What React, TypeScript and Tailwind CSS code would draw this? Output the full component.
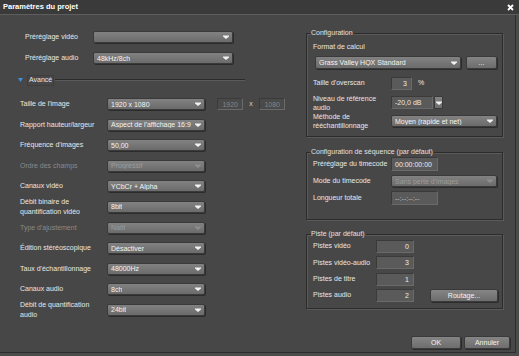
import type { ReactNode } from 'react';

function Arrow({ dim = false }: { dim?: boolean }) {
    return (
        <svg width="6" height="4" viewBox="0 0 6 4" className="shrink-0">
            <path d="M0 0.5H6V1.5L3 4L0 1.5Z" fill={dim ? '#8e8e8e' : '#f2f2f2'} />
        </svg>
    );
}

function Select({ value, className, disabled = false }: { value?: string; className: string; disabled?: boolean }) {
    return (
        <div
            className={`flex items-center justify-between rounded-[2px] border border-[#3a3a3a] bg-gradient-to-b from-[#828282] to-[#6b6b6b] pl-[3px] pr-[3px] shadow-[1px_1px_0_#2c2c2c] ${className} ${disabled ? 'text-[#9c9c9c]' : 'text-[#f4f4f4]'}`}
        >
            <span className="truncate leading-none">{value}</span>
            <Arrow dim={disabled} />
        </div>
    );
}

function Field({ value, className, dim = false }: { value: string; className: string; dim?: boolean }) {
    return (
        <div
            className={`flex items-center justify-end border border-t-[#3a3a3a] border-l-[#3a3a3a] border-r-[#6a6a6a] border-b-[#6a6a6a] pr-[4px] leading-none ${dim ? 'bg-[#4a4a4a] text-[#858585]' : 'bg-[#5a5a5a] text-[#ececec]'} ${className}`}
        >
            {value}
        </div>
    );
}

function Button({ label, className }: { label: string; className: string }) {
    return (
        <div
            className={`flex items-center justify-center rounded-[2px] border border-[#3a3a3a] bg-gradient-to-b from-[#858585] to-[#6d6d6d] text-[#f4f4f4] leading-none shadow-[1px_1px_0_#2c2c2c] ${className}`}
        >
            {label}
        </div>
    );
}

function Row({ label, disabled = false, children }: { label: ReactNode; disabled?: boolean; children: ReactNode }) {
    return (
        <div className="flex h-[12px] items-center">
            <div className={`w-[87px] leading-[10px] ${disabled ? 'text-[#8a8a8a]' : 'text-[#e8e8e8]'}`}>{label}</div>
            {children}
        </div>
    );
}

function Group({ title, className, children }: { title: string; className: string; children: ReactNode }) {
    return (
        <div className={`relative border border-[#2c2c2c] shadow-[1px_1px_0_#5a5a5a,inset_1px_1px_0_#5a5a5a] ${className}`}>
            <span className="absolute left-[4px] top-[-6px] bg-[#474747] pr-[1px] leading-[10px] text-[#e2e2e2]">{title}</span>
            {children}
        </div>
    );
}

export default function App() {
    return (
        <div className="flex h-[356px] w-[519px] flex-col bg-[#4b4b4b] font-['Liberation_Sans',Arial,sans-serif] text-[7px] text-[#e8e8e8]">
            {/* Title bar */}
            <div className="flex h-[15px] shrink-0 items-center justify-between border-b border-[#5e5e5e] bg-[#3a3a3a] pl-[3px] pr-[5px]">
                <span className="text-[7.5px] font-bold text-white">Paramètres du projet</span>
                <svg width="7" height="7" viewBox="0 0 7 7">
                    <path d="M1 1L6 6M6 1L1 6" stroke="#ffffff" strokeWidth="1.8" />
                </svg>
            </div>

            <div className="flex h-[338px] w-[516px] flex-col border-b border-r border-[#2c2c2c] bg-[#474747]">
                <div className="flex h-[305px]">
                    {/* Left column */}
                    <div className="flex w-[306px] flex-col">
                        <div className="mt-[16px] flex flex-col gap-[9px] pl-[25px]">
                            <div className="flex h-[12px] items-center">
                                <span className="w-[68px]">Préréglage vidéo</span>
                                <Select className="h-[12px] w-[140px]" />
                            </div>
                            <div className="flex h-[12px] items-center">
                                <span className="w-[68px]">Préréglage audio</span>
                                <Select value="48kHz/8ch" className="h-[12px] w-[140px]" />
                            </div>
                        </div>

                        <div className="mt-[10px] flex h-[12px] items-center pl-[18px]">
                            <svg width="5" height="4" viewBox="0 0 5 4" className="mr-[4px]">
                                <path d="M0 0H5L2.5 4Z" fill="#3d8fe0" />
                            </svg>
                            <span className="flex h-[11px] items-center border border-[#3e3e3e] px-[1px]">Avancé</span>
                            <div className="ml-[1px] h-[2px] w-[190px] border-b border-t border-b-[#5a5a5a] border-t-[#2c2c2c]" />
                        </div>

                        <div className="mt-[12px] flex flex-col gap-[8.6px] pl-[20px]">
                            <Row label="Taille de l'image">
                                <Select value="1920 x 1080" className="h-[12px] w-[98px]" />
                                <Field value="1920" dim className="ml-[12px] h-[12px] w-[26px]" />
                                <span className="w-[16px] text-center text-[#cfcfcf]">x</span>
                                <Field value="1080" dim className="h-[12px] w-[26px]" />
                            </Row>
                            <Row label="Rapport hauteur/largeur">
                                <Select value="Aspect de l'affichage 16:9" className="h-[12px] w-[98px]" />
                            </Row>
                            <Row label="Fréquence d'images">
                                <Select value="50,00" className="h-[12px] w-[98px]" />
                            </Row>
                            <Row label="Ordre des champs" disabled>
                                <Select value="Progressif" disabled className="h-[12px] w-[98px]" />
                            </Row>
                            <Row label="Canaux vidéo">
                                <Select value="YCbCr + Alpha" className="h-[12px] w-[98px]" />
                            </Row>
                            <Row label={<>Débit binaire de<br />quantification vidéo</>}>
                                <Select value="8bit" className="h-[12px] w-[98px]" />
                            </Row>
                            <Row label="Type d'ajustement" disabled>
                                <Select value="Natif" disabled className="h-[12px] w-[98px]" />
                            </Row>
                            <Row label="Édition stéréoscopique">
                                <Select value="Désactiver" className="h-[12px] w-[98px]" />
                            </Row>
                            <Row label="Taux d'échantillonnage">
                                <Select value="48000Hz" className="h-[12px] w-[98px]" />
                            </Row>
                            <Row label="Canaux audio">
                                <Select value="8ch" className="h-[12px] w-[98px]" />
                            </Row>
                            <Row label={<>Débit de quantification<br />audio</>}>
                                <Select value="24bit" className="h-[12px] w-[98px]" />
                            </Row>
                        </div>
                    </div>

                    {/* Right column */}
                    <div className="flex w-[197px] flex-col">
                        <Group title="Configuration" className="mt-[18px] flex h-[104px] flex-col pl-[6px] pt-[8px]">
                            <span className="h-[10px] leading-[10px]">Format de calcul</span>
                            <div className="mt-[4px] flex items-center pl-[2px]">
                                <Select value="Grass Valley HQX Standard" className="h-[13px] w-[146px]" />
                                <Button label="..." className="ml-[5px] h-[13px] w-[31px]" />
                            </div>
                            <div className="mt-[8px] flex h-[13px] items-center">
                                <span className="w-[78px]">Taille d'overscan</span>
                                <Field value="3" className="h-[13px] w-[21px]" />
                                <span className="ml-[6px]">%</span>
                            </div>
                            <div className="mt-[6px] flex h-[13px] items-center">
                                <span className="w-[78px] leading-[9px]">Niveau de référence<br />audio</span>
                                <div className="flex h-[13px] w-[42px] items-center border border-t-[#3a3a3a] border-l-[#3a3a3a] border-r-[#6a6a6a] border-b-[#6a6a6a] bg-[#5a5a5a] pl-[3px] leading-none">-20,0 dB</div>
                                <div className="ml-[1px] flex h-[13px] w-[9px] items-center justify-center rounded-[1px] border border-[#3a3a3a] bg-gradient-to-b from-[#858585] to-[#6d6d6d]">
                                    <Arrow />
                                </div>
                            </div>
                            <div className="mt-[6px] flex h-[12px] items-center">
                                <span className="w-[78px] leading-[9px]">Méthode de<br />rééchantillonnage</span>
                                <Select value="Moyen (rapide et net)" className="h-[12px] w-[106px]" />
                            </div>
                        </Group>

                        <Group title="Configuration de séquence (par défaut)" className="mt-[15px] flex h-[68px] flex-col gap-[4px] pl-[6px] pt-[4px]">
                            <div className="flex h-[14px] items-center">
                                <span className="w-[78px]">Préréglage du timecode</span>
                                <Field value="00:00:00:00" className="h-[14px] w-[47px] !justify-start pl-[3px]" />
                            </div>
                            <div className="flex h-[12px] items-center">
                                <span className="w-[78px]">Mode du timecode</span>
                                <Select value="Sans perte d'images" disabled className="h-[12px] w-[106px]" />
                            </div>
                            <div className="flex h-[14px] items-center">
                                <span className="w-[78px]">Longueur totale</span>
                                <Field value="--:--:--:--" className="h-[14px] w-[47px] !justify-start pl-[3px] !text-[#bdbdbd]" />
                            </div>
                        </Group>

                        <Group title="Piste (par défaut)" className="mt-[14px] flex h-[75px] flex-col gap-[3.3px] pl-[6px] pt-[5px]">
                            <div className="flex h-[13px] items-center">
                                <span className="w-[63px]">Pistes vidéo</span>
                                <Field value="0" className="h-[13px] w-[38px]" />
                            </div>
                            <div className="flex h-[13px] items-center">
                                <span className="w-[63px]">Pistes vidéo-audio</span>
                                <Field value="3" className="h-[13px] w-[38px]" />
                            </div>
                            <div className="flex h-[13px] items-center">
                                <span className="w-[63px]">Pistes de titre</span>
                                <Field value="1" className="h-[13px] w-[38px]" />
                            </div>
                            <div className="flex h-[13px] items-center">
                                <span className="w-[63px]">Pistes audio</span>
                                <Field value="2" className="h-[13px] w-[38px]" />
                                <Button label="Routage..." className="ml-[16px] h-[13px] w-[68px]" />
                            </div>
                        </Group>
                    </div>
                </div>

                {/* Footer */}
                <div className="mt-[16px] flex h-[13px] justify-end gap-[3px] pr-[5px]">
                    <Button label="OK" className="h-[13px] w-[50px]" />
                    <Button label="Annuler" className="h-[13px] w-[46px]" />
                </div>
            </div>
        </div>
    );
}
